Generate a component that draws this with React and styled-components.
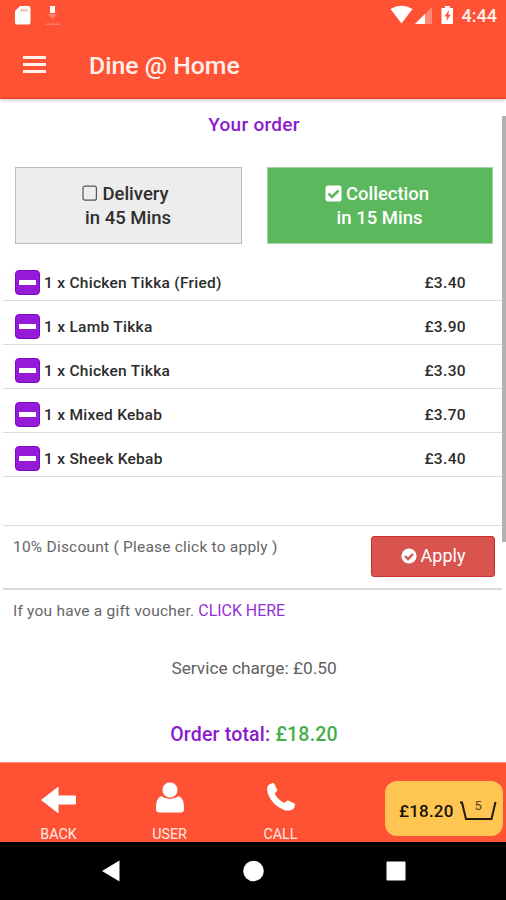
import React from 'react';
import styled, { createGlobalStyle } from 'styled-components';

const GlobalStyle = createGlobalStyle`
  * { box-sizing: border-box; }
  body { margin: 0; background: #fff; font-family: Roboto, sans-serif; color: #2c2c2c; }
  svg { display: block; flex: none; }
`;

const Screen = styled.div`
  width: 506px;
  height: 900px;
  display: flex;
  flex-direction: column;
  overflow: hidden;
  background: #fff;
`;

const StatusBar = styled.div`
  height: 32px;
  flex: none;
  display: flex;
  align-items: flex-start;
  justify-content: space-between;
  background: #ff5235;
`;

const AppBar = styled.header`
  height: 67px;
  flex: none;
  display: flex;
  align-items: center;
  gap: 43px;
  padding: 0 23px;
  background: #ff5235;
  border-bottom: 1px solid #e8401f;
  box-shadow: 0 2px 3px rgba(0, 0, 0, 0.16);
`;

const AppTitle = styled.h1`
  margin: 2px 0 0;
  font-size: 24.8px;
  line-height: 30px;
  font-weight: 500;
  color: #fff0ec;
`;

const Content = styled.main`
  height: 663px;
  flex: none;
  display: flex;
`;

const Order = styled.div`
  width: 502px;
  flex: none;
  display: flex;
  flex-direction: column;
`;

const ScrollThumb = styled.div`
  width: 4px;
  height: 426px;
  margin-top: 17px;
  background: #b2b2b2;
`;

const Heading = styled.h2`
  margin: 13px 0 0 6px;
  height: 24px;
  font-size: 19px;
  line-height: 25px;
  letter-spacing: 0.3px;
  font-weight: 500;
  text-align: center;
  color: #8a1acb;
`;

const Options = styled.div`
  display: flex;
  gap: 25px;
  margin: 31px 0 0 15px;
`;

const Option = styled.button`
  width: ${(p) => (p.$selected ? '226px' : '227px')};
  height: 77px;
  display: flex;
  flex-direction: column;
  align-items: center;
  justify-content: center;
  padding: 0 1px 0 0;
  font: 500 18.5px/24px Roboto, sans-serif;
  color: ${(p) => (p.$selected ? '#fff' : '#2f2f2f')};
  background: ${(p) => (p.$selected ? '#5cb85c' : '#ededed')};
  border: 1px solid ${(p) => (p.$selected ? '#a9d2ac' : '#bdbdbd')};
`;

const OptionName = styled.span`
  display: flex;
  align-items: center;
  gap: 4px;
  padding-right: 5px;
`;

const Items = styled.ul`
  list-style: none;
  margin: 13px 0 0 3px;
  padding: 0;
`;

const Item = styled.li`
  height: 44px;
  display: flex;
  align-items: flex-start;
  padding: 13px 36px 0 12px;
  border-bottom: 1px solid #dcdcdc;
  font-size: 15.5px;
  line-height: 27px;
  letter-spacing: 0.28px;
  font-weight: 500;
`;

const RemoveButton = styled.button`
  width: 25px;
  height: 25px;
  flex: none;
  display: grid;
  place-items: center;
  padding: 0;
  border: 1px solid #7d09c0;
  border-radius: 4px;
  background: #951bd8;
`;

const Minus = styled.span`
  width: 17px;
  height: 5px;
  background: #fff;
`;

const ItemName = styled.span`
  margin-left: 4px;
  flex: 1;
`;

const Price = styled.span`
  letter-spacing: 0.35px;
`;

const Discount = styled.section`
  height: 65px;
  display: flex;
  justify-content: space-between;
  margin: 48px 0 0 3px;
  padding: 10px 7px 0 10px;
  border-top: 1px solid #dcdcdc;
  border-bottom: 2px solid #dadada;
`;

const Note = styled.span`
  font-size: 15.5px;
  line-height: 22px;
  letter-spacing: 0.22px;
  color: #666;
`;

const ApplyButton = styled.button`
  width: 124px;
  height: 41px;
  display: flex;
  align-items: center;
  justify-content: center;
  gap: 4px;
  padding: 0 0 1px 0;
  border: 1px solid #c9302c;
  border-radius: 3px;
  background: #d9534f;
  font: 400 18px/24px Roboto, sans-serif;
  color: #fff;
`;

const Voucher = styled.p`
  margin: 10px 0 0 13px;
  height: 20px;
  line-height: 20px;
`;

const VoucherLink = styled.a`
  font-size: 15.9px;
  color: #9430d6;
`;

const ServiceCharge = styled.p`
  margin: 36px 0 0 6px;
  height: 24px;
  font-size: 17.3px;
  line-height: 24px;
  text-align: center;
  color: #606060;
`;

const Total = styled.p`
  margin: 43px 0 0 6px;
  height: 24px;
  font-size: 19.5px;
  line-height: 24px;
  letter-spacing: 0.2px;
  font-weight: 500;
  text-align: center;
  color: #8a1acb;
`;

const Amount = styled.span`
  color: #43ae49;
`;

const BottomBar = styled.nav`
  height: 80px;
  flex: none;
  display: flex;
  justify-content: space-between;
  padding: 0 3px 0 3px;
  background: #ff5235;
  border-top: 1px solid #ff8c78;
`;

const Tabs = styled.div`
  display: flex;
`;

const Tab = styled.a`
  width: 111px;
  display: flex;
  flex-direction: column;
  align-items: center;
  font-size: 14.3px;
  line-height: 16px;
  color: #ffeae5;
`;

const TabIcon = styled.span`
  height: 63px;
  display: grid;
  place-items: center;
  padding-top: ${(p) => p.$top};
`;

const BasketButton = styled.button`
  width: 118px;
  height: 55px;
  margin-top: 18px;
  display: flex;
  align-items: center;
  gap: 6px;
  padding: 5px 0 0 14px;
  border: 0;
  border-radius: 12px;
  background: #ffc552;
  font: 500 17px/24px Roboto, sans-serif;
  letter-spacing: 0.2px;
  color: #17130a;
`;

const Basket = styled.span`
  display: grid;
  place-items: center;
  > * { grid-area: 1 / 1; }
`;

const BasketCount = styled.span`
  font-size: 13px;
  line-height: 14px;
  font-weight: 400;
  letter-spacing: 0;
  padding-bottom: 10px;
  color: #594518;
`;

const SystemNav = styled.footer`
  height: 58px;
  flex: none;
  background: #000;
`;

const StatusIcons = styled.div`
  display: flex;
  align-items: flex-start;
`;

const Clock = styled.span`
  margin: 4px 9px 0 7px;
  font-size: 18px;
  line-height: 24px;
  font-weight: 500;
  color: #fff0ed;
`;

const items = [
  ['Chicken Tikka (Fried)', '£3.40'],
  ['Lamb Tikka', '£3.90'],
  ['Chicken Tikka', '£3.30'],
  ['Mixed Kebab', '£3.70'],
  ['Sheek Kebab', '£3.40'],
];

const NoticeIcons = () => (
  <svg width="64" height="32" fill="#fff">
    <path d="M20 6h8.500q2 0 2 2v14.500q0 2-2 2H17q-2 0-2-2V11Z" />
    <path d="M21.500 9v2.500M24 9v2.500M26.500 9v2.500" stroke="#ff9c88" strokeWidth="1.500" />
    <path d="M50 6h5v7h-5Z" />
    <path d="M47.500 14h10l-5 5.500Z" opacity=".28" />
    <path d="M45.500 23.500h14V25h-14Z" opacity=".25" />
  </svg>
);

const SignalIcons = () => (
  <svg width="66" height="32" fill="#fff">
    <path d="M1.500 9Q12.500 2.500 23.500 9L12.500 23.500Z" />
    <path d="M43 7v17H26Z" opacity=".32" />
    <path d="M36 14v10H26Z" />
    <path fillRule="evenodd" d="M56 6h5v2h3v16H52.500V8H56ZM60 10l-4.500 6.500h2.500l-.7 4.500 4.500-6.500h-2.500Z" />
  </svg>
);

const MenuIcon = () => (
  <svg width="23" height="18" fill="#fff0ec">
    <path d="M0 0h23v3H0ZM0 7h23v3H0ZM0 14h23v3H0Z" />
  </svg>
);

const EmptyBox = () => (
  <svg width="16" height="17" fill="none" stroke="#555" strokeWidth="1.200">
    <rect x="1" y="1.200" width="13.400" height="14" rx="2" />
  </svg>
);

const CheckedBox = () => (
  <svg width="17" height="17">
    <rect x=".5" y=".5" width="16" height="16" rx="2.500" fill="#fff" />
    <path d="m3.500 8.500 3.500 3.500 6.500-6.500" fill="none" stroke="#5cb85c" strokeWidth="2.500" />
  </svg>
);

const CheckCircle = () => (
  <svg width="16" height="16">
    <circle cx="8" cy="8" r="7.600" fill="#fff" />
    <path d="m4 8 3 3 5-5" fill="none" stroke="#d9534f" strokeWidth="2.300" />
  </svg>
);

const BackIcon = () => (
  <svg width="35" height="28" fill="#fff">
    <path d="M0 14 17.500.5V9.500H34q1 0 1 1v7q0 1-1 1H17.500V27.500Z" />
  </svg>
);

const UserIcon = () => (
  <svg width="28" height="31" fill="#fff">
    <path d="M5.500 14Q8.500 16.800 14 16.800T22.500 14Q28 16 28 25v2q0 3.500-3.500 3.500h-21Q0 30.500 0 27v-2Q0 16 5.500 14Z" />
    <circle cx="14" cy="8" r="7.900" stroke="#ff5235" strokeWidth=".7" />
  </svg>
);

const PhoneIcon = () => (
  <svg width="28" height="28" fill="#fff">
    <path d="M1 2.500Q2.500.5 6 0q1 0 1.500 1.200L10 6.500q.4 1-.3 1.800L7.700 10.500Q11 17.200 17.500 20l2.500-2.200q.8-.5 1.700-.1l5.300 2.600q1.200.6.9 1.900-.5 2.800-2 4.100-3.500 2.400-9.300.4Q5.500 22.300 1.200 11.500-.8 5.800 1 2.500Z" />
  </svg>
);

const BasketIcon = () => (
  <svg width="37" height="20" fill="none" stroke="#211a0c" strokeWidth="2">
    <path d="M0 1.500H2L6 18H31.500L35.500 1" />
  </svg>
);

const NavIcons = () => (
  <svg width="506" height="58" fill="#fff">
    <path d="M102 29 119.500 18.500v21Z" />
    <circle cx="253.500" cy="29" r="10.300" />
    <rect x="386.500" y="19.500" width="19" height="19" rx="1" />
  </svg>
);

export default function App() {
  return (
    <Screen>
      <GlobalStyle />
      <StatusBar>
        <NoticeIcons />
        <StatusIcons>
          <SignalIcons />
          <Clock>4:44</Clock>
        </StatusIcons>
      </StatusBar>
      <AppBar>
        <MenuIcon />
        <AppTitle>Dine @ Home</AppTitle>
      </AppBar>
      <Content>
        <Order>
          <Heading>Your order</Heading>
          <Options>
            <Option>
              <OptionName><EmptyBox />Delivery</OptionName>
              <span>in 45 Mins</span>
            </Option>
            <Option $selected>
              <OptionName><CheckedBox />Collection</OptionName>
              <span>in 15 Mins</span>
            </Option>
          </Options>
          <Items>
            {items.map(([name, price]) => (
              <Item key={name}>
                <RemoveButton aria-label={`Remove ${name}`}><Minus /></RemoveButton>
                <ItemName>1 x {name}</ItemName>
                <Price>{price}</Price>
              </Item>
            ))}
          </Items>
          <Discount>
            <Note>10% Discount ( Please click to apply )</Note>
            <ApplyButton><CheckCircle />Apply</ApplyButton>
          </Discount>
          <Voucher>
            <Note>If you have a gift voucher. </Note>
            <VoucherLink>CLICK HERE</VoucherLink>
          </Voucher>
          <ServiceCharge>Service charge: £0.50</ServiceCharge>
          <Total>Order total: <Amount>£18.20</Amount></Total>
        </Order>
        <ScrollThumb />
      </Content>
      <BottomBar>
        <Tabs>
          <Tab><TabIcon $top="11px"><BackIcon /></TabIcon>BACK</Tab>
          <Tab><TabIcon $top="6px"><UserIcon /></TabIcon>USER</Tab>
          <Tab><TabIcon $top="5px"><PhoneIcon /></TabIcon>CALL</Tab>
        </Tabs>
        <BasketButton>
          £18.20
          <Basket>
            <BasketIcon />
            <BasketCount>5</BasketCount>
          </Basket>
        </BasketButton>
      </BottomBar>
      <SystemNav><NavIcons /></SystemNav>
    </Screen>
  );
}
